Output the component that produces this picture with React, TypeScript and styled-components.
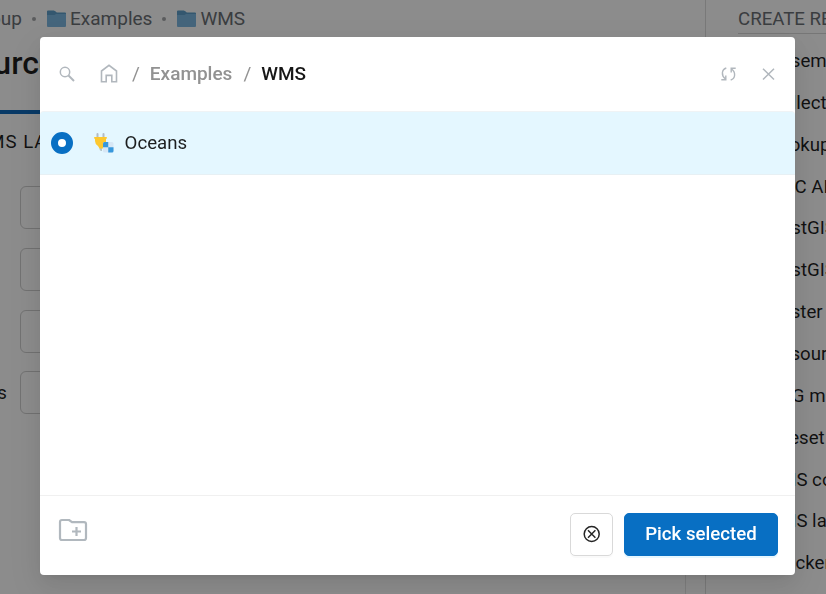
import React from "react";
import styled, { createGlobalStyle } from "styled-components";

const GlobalStyle = createGlobalStyle`
  *, *::before, *::after { box-sizing: border-box; }
  body {
    margin: 0;
    overflow: hidden;
    background: #fff;
    color: rgba(0, 0, 0, 0.88);
    font-family: Roboto, "Liberation Sans", sans-serif;
    font-size: 18.67px;
  }
`;

const Page = styled.div`
  display: flex;
  width: 826px;
  height: 594px;
  overflow: hidden;
`;

const Main = styled.main`
  display: flex;
  flex-direction: column;
  width: 686px;
  overflow: hidden;
  flex: none;
`;

const Content = styled.div`
  flex: 1;
  border-right: 1px solid #e4e4e4;
`;

const Trail = styled.nav`
  display: flex;
  align-items: center;
  height: 37px;
  color: #6b7075;
  font-size: 19px;
`;

const TrailRoot = styled.span`
  display: flex;
  flex: none;
  justify-content: flex-end;
  width: 22px;
  white-space: nowrap;
`;

const Dot = styled.span`
  width: 4px;
  height: 4px;
  margin: 1px 11px 0 10px;
  border-radius: 50%;
  background: #a4a7aa;
`;

const TrailLink = styled.span`
  display: flex;
  align-items: center;
  gap: 4px;
`;

const Title = styled.h1`
  display: flex;
  justify-content: flex-end;
  width: 56px;
  height: 73px;
  margin: 0;
  padding-top: 7px;
  font-size: 32px;
  line-height: 38px;
  font-weight: 500;
`;

const TabLine = styled.div`
  height: 4px;
  background: #106abc;
`;

const TabLabel = styled.div`
  display: flex;
  justify-content: flex-end;
  width: 83px;
  height: 72px;
  padding-top: 16px;
  line-height: 24px;
  letter-spacing: 1px;
  white-space: nowrap;
`;

const Form = styled.div`
  display: grid;
  gap: 18.8px;
`;

const Field = styled.div`
  display: flex;
  align-items: center;
  height: 43px;
`;

const FieldLabel = styled.span`
  display: flex;
  justify-content: flex-end;
  width: 7px;
  margin-right: 13px;
`;

const FieldBox = styled.div`
  width: 620px;
  height: 43px;
  border: 1px solid #cfcfcf;
  border-radius: 6px;
`;

const Sidebar = styled.aside`
  flex: none;
  width: 240px;
  margin-left: 19px;
  padding-left: 32px;
  border-left: 1px solid #dcdcdc;
`;

const SidebarTitle = styled.div`
  height: 34px;
  line-height: 38px;
  color: #6b7075;
  border-bottom: 1px solid #d8d8d8;
`;

const CreateList = styled.ul`
  margin: 6px 0 0;
  padding: 0 0 0 31px;
  list-style: none;
`;

const CreateItem = styled.li`
  height: 41.87px;
  line-height: 42.4px;
  white-space: nowrap;
`;

const Mask = styled.div`
  position: fixed;
  inset: 0;
  padding: 37px 31px 0 40px;
  background: rgba(0, 0, 0, 0.45);
`;

const Dialog = styled.section`
  display: flex;
  flex-direction: column;
  height: 538px;
  background: #fff;
  border-radius: 4px;
  box-shadow: 0 8px 21px rgba(0, 0, 0, 0.08), 0 4px 8px -5px rgba(0, 0, 0, 0.12),
    0 12px 37px 10px rgba(0, 0, 0, 0.05);
`;

const Header = styled.header`
  display: flex;
  align-items: center;
  height: 74px;
  padding: 0 19px 0 18.5px;
  color: #b1b7bd;
  svg { flex: none; }
`;

const Path = styled.div`
  display: flex;
  flex: 1;
  align-items: center;
  margin: -2px 0 0 25.5px;
  font-size: 19px;
  font-weight: 500;
  color: #929292;
`;

const Slash = styled.span`
  margin: 0 10px 0 14px;
  font-weight: 400;
`;

const Parent = styled.span`
  margin-right: -3px;
`;

const Current = styled.span`
  color: #171717;
`;

const Tools = styled.div`
  display: flex;
  gap: 25px;
`;

const Body = styled.div`
  flex: 1;
`;

const Row = styled.div`
  display: flex;
  align-items: center;
  height: 64px;
  padding-left: 11px;
  background: #e4f7ff;
  border-top: 1px solid #eff3f5;
  border-bottom: 1px solid #e7f0f4;
  border-radius: 4px 4px 0 0;
`;

const Radio = styled.span`
  width: 22px;
  height: 22px;
  margin-right: 21px;
  border: 7px solid #086fc3;
  border-radius: 50%;
  background: #fff;
`;

const RowLabel = styled.span`
  margin-left: 10.6px;
`;

const Footer = styled.footer`
  display: flex;
  align-items: flex-start;
  height: 80px;
  padding: 17px 17px 0 18px;
  border-top: 1px solid #f0f0f0;
`;

const Spacer = styled.div`
  flex: 1;
`;

const Button = styled.button<{ $primary?: boolean }>`
  display: flex;
  align-items: center;
  justify-content: center;
  width: ${(p) => (p.$primary ? 154 : 43)}px;
  height: 43px;
  margin-left: ${(p) => (p.$primary ? 11 : 0)}px;
  padding: 0 0 2px;
  border: 1px solid ${(p) => (p.$primary ? "#086fc3" : "#d9d9d9")};
  border-radius: 5px;
  background: ${(p) => (p.$primary ? "#086fc3" : "#fff")};
  color: ${(p) => (p.$primary ? "#fff" : "#252525")};
  box-shadow: 0 2px 0 ${(p) => (p.$primary ? "rgba(5, 175, 255, 0.1)" : "rgba(0, 0, 0, 0.02)")};
  font: inherit;
  font-weight: 500;
`;

const FolderIcon = () => (
  <svg width="19" height="17" viewBox="0 0 19 17">
    <path d="M0 2Q0 1 1 1H8L10 3H18Q19 3 19 4V16Q19 17 18 17H1Q0 17 0 16Z" fill="#7db8e2" />
    <path d="M0 1.5Q0 .5 1 .5H7L9.5 2.5H18Q19 2.5 19 3.5V4H9L7.5 5H0Z" fill="#5f9fca" />
  </svg>
);

const SearchIcon = () => (
  <svg width="16" height="16" viewBox="0 0 16 16" fill="none" stroke="currentColor" strokeWidth="1.5">
    <circle cx="6" cy="6" r="4.7" />
    <path d="M9.5 9.5L15 15" strokeWidth="1.9" />
  </svg>
);

const HomeIcon = () => (
  <svg width="18" height="19" viewBox="0 0 18 19" fill="none" stroke="#b1b7bd" strokeWidth="1.6">
    <path d="M1.5 7L9 1.3L16.5 7V17.7H11.8V11.4H6.2V17.7H1.5Z" />
  </svg>
);

const RefreshIcon = () => (
  <svg width="15" height="14" viewBox="0 0 15 14" fill="none" stroke="currentColor" strokeWidth="1.4">
    <path d="M5.3 1C.5 2.5 0 8.6 4.4 12M4.8 8.5V12.8H.3" />
    <path d="M9.7 13C14.5 11.5 15 5.4 10.6 2M10.2 5.5V1.2H14.7" />
  </svg>
);

const CloseIcon = () => (
  <svg width="15" height="14" viewBox="0 0 15 14" stroke="currentColor" strokeWidth="1.5">
    <path d="M2 1.7L13 12.5M13 1.7L2 12.5" />
  </svg>
);

const ConnectionIcon = () => (
  <svg width="20" height="20" viewBox="0 0 20 20">
    <path d="M3.5 1V5M9.5 1V5" stroke="#b4bcc3" strokeWidth="2" strokeLinecap="round" />
    <path d="M5.5 14H8V18H7Q5.5 17.5 5.5 16Z" fill="#b4c4ca" />
    <path d="M.2 4H12.8V5.7H12V9.5Q11.5 12 9.5 13V15.5H5.5L4 13Q1 11 1 8V5.7H.2Z" fill="#fdc82f" />
    <rect x="9" y="9" width="10.5" height="10.5" rx="1.5" fill="#d7e7f5" />
    <path d="M9 10.5Q9 9 10.5 9H14.25V14.25H9Z" fill="#3798dc" />
    <path d="M14.25 14.25H19.5V18Q19.5 19.5 18 19.5H14.25Z" fill="#3798dc" />
  </svg>
);

const NewFolderButton = styled.span`
  display: flex;
  margin-top: 5px;
`;

const NewFolderIcon = () => (
  <svg width="30" height="24" viewBox="0 0 30 24" fill="none" stroke="#b1b8be" strokeWidth="2.2" strokeLinejoin="round">
    <path d="M4 2H11L14 4.2H26Q28 4.2 28 6V20Q28 22 26 22H4Q2 22 2 20V4Q2 2 4 2Z" />
    <path d="M18.5 9V18M14 13.5H23" />
  </svg>
);

const ClearIcon = () => (
  <svg width="18" height="18" viewBox="0 0 18 18" fill="none" stroke="currentColor" strokeWidth="1.5">
    <circle cx="8.7" cy="9" r="7.5" />
    <path d="M5 5.3L12.4 12.7M12.4 5.3L5 12.7" />
  </svg>
);

const resourceTypes = [
  "Basemap", "Collection", "Lookup table", "OGC API - Features", "PostGIS connection",
  "PostGIS layer", "Raster layer", "Resource group", "SVG marker library", "Tileset",
  "TMS connection", "TMS layer", "Tracker",
];

const fieldLabels = ["", "", "", "Layers"];

export default function App() {
  return (
    <>
      <GlobalStyle />
      <Page>
        <Main>
          <Trail>
            <TrailRoot>Main resource group</TrailRoot>
            <Dot />
            <TrailLink><FolderIcon />Examples</TrailLink>
            <Dot />
            <TrailLink><FolderIcon />WMS</TrailLink>
          </Trail>
          <Content>
            <Title>Resource</Title>
            <TabLine />
            <TabLabel>WMS LAYER</TabLabel>
            <Form>
              {fieldLabels.map((label, i) => (
                <Field key={i}>
                  <FieldLabel>{label}</FieldLabel>
                  <FieldBox />
                </Field>
              ))}
            </Form>
          </Content>
        </Main>
        <Sidebar>
          <SidebarTitle>CREATE RESOURCE</SidebarTitle>
          <CreateList>
            {resourceTypes.map((name) => <CreateItem key={name}>{name}</CreateItem>)}
          </CreateList>
        </Sidebar>
      </Page>
      <Mask>
        <Dialog role="dialog">
          <Header>
            <SearchIcon />
            <Path>
              <HomeIcon />
              <Slash>/</Slash>
              <Parent>Examples</Parent>
              <Slash>/</Slash>
              <Current>WMS</Current>
            </Path>
            <Tools><RefreshIcon /><CloseIcon /></Tools>
          </Header>
          <Body>
            <Row>
              <Radio />
              <ConnectionIcon />
              <RowLabel>Oceans</RowLabel>
            </Row>
          </Body>
          <Footer>
            <NewFolderButton><NewFolderIcon /></NewFolderButton>
            <Spacer />
            <Button aria-label="Clear"><ClearIcon /></Button>
            <Button $primary>Pick selected</Button>
          </Footer>
        </Dialog>
      </Mask>
    </>
  );
}
